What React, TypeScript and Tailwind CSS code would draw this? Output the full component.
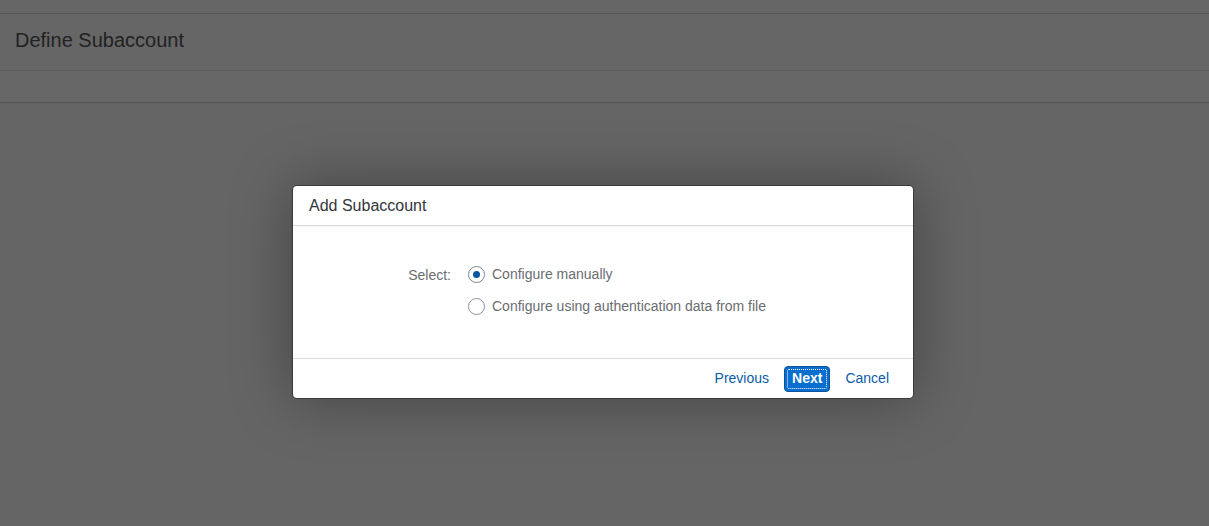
export default function App() {
    return (
        <div className="relative h-[526px] w-full overflow-hidden bg-[#656565] font-['Liberation_Sans',Arial,sans-serif]">
            <div className="h-[14px] border-b border-[#555555] bg-[#666666]" />
            <div className="flex h-[57px] items-center border-b border-[#5e5e5e] bg-[#666666] px-[15px] pb-[4px]">
                <h1 className="text-[20px] leading-none text-[#222222]">Define Subaccount</h1>
            </div>
            <div className="h-[32px] border-b border-[#555555] bg-[#676767]" />

            <div className="absolute inset-0 flex items-start justify-center pr-[3px] pt-[186px]">
                <div className="w-[620px] overflow-hidden rounded-[4px] bg-white shadow-[0_0_60px_rgba(0,0,0,0.35)] ring-1 ring-[#3a3a3a]">
                    <div className="flex h-[40px] items-center border-b border-[#d9d9d9] px-4 shadow-[0_1px_2px_rgba(0,0,0,0.05)]">
                        <h2 className="text-[16px] text-[#32363a]">Add Subaccount</h2>
                    </div>
                    <div className="flex gap-[17px] pb-[42px] pl-[100px] pt-[38px] text-[14px] text-[#6a6d70]">
                        <div className="w-[58px] pt-[1px] text-right">Select:</div>
                        <div className="flex flex-col gap-[12px]">
                            <label className="flex h-[20px] items-center gap-[7px]">
                                <span className="flex h-[17px] w-[17px] items-center justify-center rounded-full border border-[#7b8794]">
                                    <span className="h-[7px] w-[7px] rounded-full bg-[#0854a0]" />
                                </span>
                                Configure manually
                            </label>
                            <label className="flex h-[20px] items-center gap-[7px]">
                                <span className="h-[17px] w-[17px] rounded-full border border-[#89919a]" />
                                Configure using authentication data from file
                            </label>
                        </div>
                    </div>
                    <div className="flex h-[40px] items-center justify-end gap-[15px] border-t border-[#d9d9d9] pr-6 text-[14px]">
                        <button className="text-[#0a5ba8]">Previous</button>
                        <button className="flex h-[26px] items-center rounded-[4px] border border-[#0854a0] bg-[#0a6ed1] p-[2px]">
                            <span className="flex h-full items-center rounded-[2px] border border-dotted border-white px-[4px] font-bold text-white">Next</span>
                        </button>
                        <button className="text-[#0a5ba8]">Cancel</button>
                    </div>
                </div>
            </div>
        </div>
    )
}
